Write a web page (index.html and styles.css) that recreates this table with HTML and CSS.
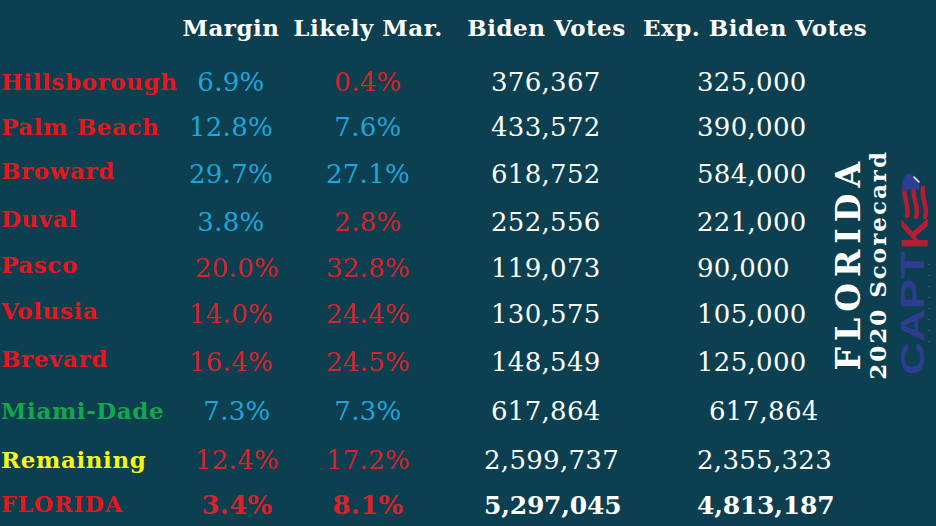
FILE: index.html
```html
<!DOCTYPE html>
<html lang="en">
<head>
<meta charset="utf-8">
<title>Florida 2020 Scorecard</title>
<link rel="stylesheet" href="styles.css">
</head>
<body>
<div class="board">
  <div class="hd c-margin">Margin</div>
  <div class="hd c-likely">Likely Mar.</div>
  <div class="hd c-biden">Biden Votes</div>
  <div class="hd c-exp">Exp. Biden Votes</div>

  <div class="name red">Hillsborough</div>
  <div class="pct blue">6.9%</div><div class="pct red2">0.4%</div>
  <div class="num n-biden">376,367</div><div class="num n-exp">325,000</div>

  <div class="name red">Palm Beach</div>
  <div class="pct blue">12.8%</div><div class="pct blue">7.6%</div>
  <div class="num n-biden">433,572</div><div class="num n-exp">390,000</div>

  <div class="name red lift">Broward</div>
  <div class="pct blue">29.7%</div><div class="pct blue">27.1%</div>
  <div class="num n-biden">618,752</div><div class="num n-exp">584,000</div>

  <div class="name red lift">Duval</div>
  <div class="pct blue">3.8%</div><div class="pct red2">2.8%</div>
  <div class="num n-biden">252,556</div><div class="num n-exp">221,000</div>

  <div class="name red lift">Pasco</div>
  <div class="pct red2 p-right">20.0%</div><div class="pct red2">32.8%</div>
  <div class="num n-biden">119,073</div><div class="num n-exp">90,000</div>

  <div class="name red lift">Volusia</div>
  <div class="pct red2">14.0%</div><div class="pct red2">24.4%</div>
  <div class="num n-biden">130,575</div><div class="num n-exp">105,000</div>

  <div class="name red lift">Brevard</div>
  <div class="pct red2">16.4%</div><div class="pct red2">24.5%</div>
  <div class="num n-biden">148,549</div><div class="num n-exp">125,000</div>

  <div class="name green">Miami-Dade</div>
  <div class="pct blue p-right">7.3%</div><div class="pct blue">7.3%</div>
  <div class="num n-biden">617,864</div><div class="num n-exp n-shift">617,864</div>

  <div class="name yellow">Remaining</div>
  <div class="pct red2 p-right">12.4%</div><div class="pct red2">17.2%</div>
  <div class="num n-biden n-wide">2,599,737</div><div class="num n-exp">2,355,323</div>

  <div class="name red caps">FLORIDA</div>
  <div class="pct red2 strong p-right">3.4%</div><div class="pct red2 strong">8.1%</div>
  <div class="num n-biden n-wide strong">5,297,045</div><div class="num n-exp strong">4,813,187</div>

  <div class="side">
    <div class="vt title-big">FLORIDA</div>
    <div class="vt title-sub">2020 Scorecard</div>
    <svg class="logo" width="44" height="206" viewBox="0 0 44 206" aria-label="CAPTK">
      <g transform="translate(0,206) rotate(-90)">
        <text x="3" y="33" class="logo-blue" font-size="34" textLength="124" lengthAdjust="spacingAndGlyphs">CAPT</text>
        <text x="129" y="36" class="logo-red" font-size="36" textLength="31" lengthAdjust="spacingAndGlyphs">K</text>
        <text x="35" y="40" class="logo-tag" font-size="5" textLength="80" lengthAdjust="spacing">• • • • • • • •</text>
        <path d="M161 34 C170 38 178 30 190 32" class="sw-red"/>
        <path d="M161 25 C171 29 180 20 193 23" class="sw-red"/>
        <path d="M162 16 C172 19 181 11 192 14" class="sw-red"/>
        <path d="M186 13 C192 9 200 11 205 17 C203 25 195 30 188 28 C190 22 189 17 186 13 Z" class="sw-blue"/>
        <path d="M196 28 L201 23" class="sw-white"/>
      </g>
    </svg>
  </div>
</div>
</body>
</html>
```

FILE: styles.css
```css
html, body {
  margin: 0;
  padding: 0;
  background: #0c3f4f;
}

.board {
  width: 936px;
  height: 526px;
  overflow: hidden;
  background: #0c3f4f;
  display: grid;
  grid-template-columns: 179px 104px 170px 187px 190px 106px;
  grid-template-rows: 60px 44px 46px 48px 47px 46px 46px 49px 50px 48px 42px;
  font-family: "DejaVu Serif", "Liberation Serif", serif;
  color: #ffffff;
}

.hd {
  font-weight: bold;
  font-size: 23px;
  letter-spacing: 0.5px;
  line-height: 30px;
  padding-top: 13px;
  text-align: center;
  white-space: nowrap;
}
.c-margin { grid-column: 2; }
.c-likely { grid-column: 3; }
.c-biden  { grid-column: 4; }
.c-exp    { grid-column: 5 / 7; text-align: left; padding-left: 3px; }

.name {
  grid-column: 1;
  font-weight: bold;
  font-size: 23px;
  letter-spacing: 0.6px;
  padding-left: 1px;
  display: flex;
  align-items: center;
  padding-bottom: 2px;
  white-space: nowrap;
}
.lift { padding-bottom: 7px; }
.caps { font-size: 22px; letter-spacing: 1px; }

.pct, .num {
  font-size: 26px;
  display: flex;
  align-items: center;
  white-space: nowrap;
  letter-spacing: 0.3px;
}
.pct { justify-content: center; }
.p-right { padding-left: 12px; }
.n-biden { padding-left: 38px; }
.n-wide { padding-left: 31px; }
.n-exp { padding-left: 57px; }
.n-shift { padding-left: 69px; }

.strong { font-weight: bold; }
.num.strong { font-size: 25px; letter-spacing: -0.2px; }

.red { color: #e5161d; }
.red2 { color: #d7232b; }
.blue { color: #1da6dd; }
.green { color: #14a64d; }
.yellow { color: #f6f51c; }

.side {
  grid-column: 6;
  grid-row: 2 / 12;
  display: flex;
  align-items: flex-end;
  padding-bottom: 146px;
  padding-left: 3px;
}

.vt {
  writing-mode: vertical-rl;
  transform: rotate(180deg);
  font-weight: bold;
  white-space: nowrap;
  color: #ffffff;
}
.title-big {
  font-size: 33px;
  letter-spacing: 6px;
  line-height: 32px;
  margin-bottom: 10px;
}
.title-sub {
  font-size: 23px;
  letter-spacing: 2px;
  line-height: 26px;
}
.logo {
  margin-bottom: 2px;
}
.logo-blue { fill: #2d3d8f; font-family: "Liberation Sans", "DejaVu Sans", sans-serif; font-weight: bold; }
.logo-red { fill: #b51d33; font-family: "Liberation Sans", "DejaVu Sans", sans-serif; font-weight: bold; }
.logo-tag { fill: #3f6a86; font-family: "DejaVu Sans", sans-serif; }
.sw-red { fill: none; stroke: #b51d33; stroke-width: 4.5; stroke-linecap: round; }
.sw-blue { fill: #2d3d8f; }
.sw-white { stroke: #ffffff; stroke-width: 1.5; stroke-linecap: round; }
```
